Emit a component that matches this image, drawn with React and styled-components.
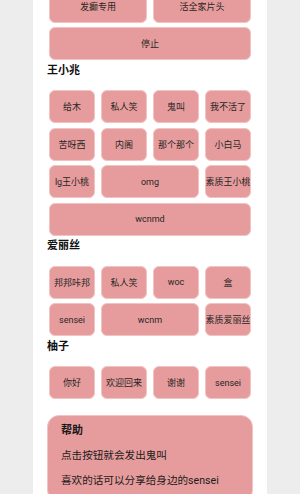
import React from "react";
import styled, { createGlobalStyle } from "styled-components";

const Global = createGlobalStyle`
  html, body { margin: 0; padding: 0; background: #ededed; overflow: hidden; }
  body { font-family: Roboto, "Noto Sans CJK SC", sans-serif; }
`;

const Column = styled.div`
  width: 234px;
  margin: 0 auto;
  min-height: 100vh;
  background: #ffffff;
  padding: 0 16px;
  box-sizing: border-box;
`;

const Content = styled.div`
  margin-top: -10.5px;
`;

const Grid = styled.div`
  display: grid;
  grid-template-columns: repeat(4, 1fr);
  column-gap: 6px;
  row-gap: 4.5px;
`;

const Btn = styled.button`
  grid-column: span ${(p) => p.$span || 1};
  height: 33px;
  margin: 0;
  padding: 0;
  border: 1px solid #f1c3c3;
  border-radius: 6px;
  background: #e69c9c;
  color: #262626;
  font-family: Roboto, "Noto Sans CJK SC", sans-serif;
  font-size: 9px;
  white-space: nowrap;
  overflow: hidden;
  display: flex;
  align-items: center;
  justify-content: center;
`;

const Heading = styled.div`
  margin: 0 -2px;
  padding-top: 2.5px;
  height: 16px;
  margin-bottom: 11.5px;
  font-size: 11px;
  line-height: 16px;
  font-weight: bold;
  color: #111111;
`;

const Help = styled.div`
  margin: 16px -2px 0;
  padding: 7px 13px 12px;
  background: #e69c9c;
  border: 1px solid #f1c3c3;
  border-radius: 12px;
  color: #1a1a1a;
`;

const HelpTitle = styled.div`
  font-size: 11px;
  line-height: 16px;
  font-weight: bold;
`;

const HelpText = styled.p`
  margin: 9px 0 0;
  font-size: 10.6px;
  line-height: 16px;
`;

const groups = [
  {
    name: "王小兆",
    items: [
      ["给木"], ["私人笑"], ["鬼叫"], ["我不活了"],
      ["苦呀西"], ["内阁"], ["那个那个"], ["小白马"],
      ["lg王小桃"], ["omg", 2], ["素质王小桃"],
      ["wcnmd", 4],
    ],
  },
  {
    name: "爱丽丝",
    items: [
      ["邦邦咔邦"], ["私人笑"], ["woc"], ["盒"],
      ["sensei"], ["wcnm", 2], ["素质爱丽丝"],
    ],
  },
  {
    name: "柚子",
    items: [["你好"], ["欢迎回来"], ["谢谢"], ["sensei"]],
  },
];

export default function App() {
  return (
    <>
      <Global />
      <Column>
        <Content>
          <Grid>
            <Btn $span={2}>发癫专用</Btn>
            <Btn $span={2}>活全家片头</Btn>
            <Btn $span={4}>停止</Btn>
          </Grid>
          {groups.map((g) => (
            <React.Fragment key={g.name}>
              <Heading>{g.name}</Heading>
              <Grid>
                {g.items.map(([label, span], i) => (
                  <Btn key={i} $span={span}>{label}</Btn>
                ))}
              </Grid>
            </React.Fragment>
          ))}
          <Help>
            <HelpTitle>帮助</HelpTitle>
            <HelpText>点击按钮就会发出鬼叫</HelpText>
            <HelpText>喜欢的话可以分享给身边的sensei</HelpText>
          </Help>
        </Content>
      </Column>
    </>
  );
}
